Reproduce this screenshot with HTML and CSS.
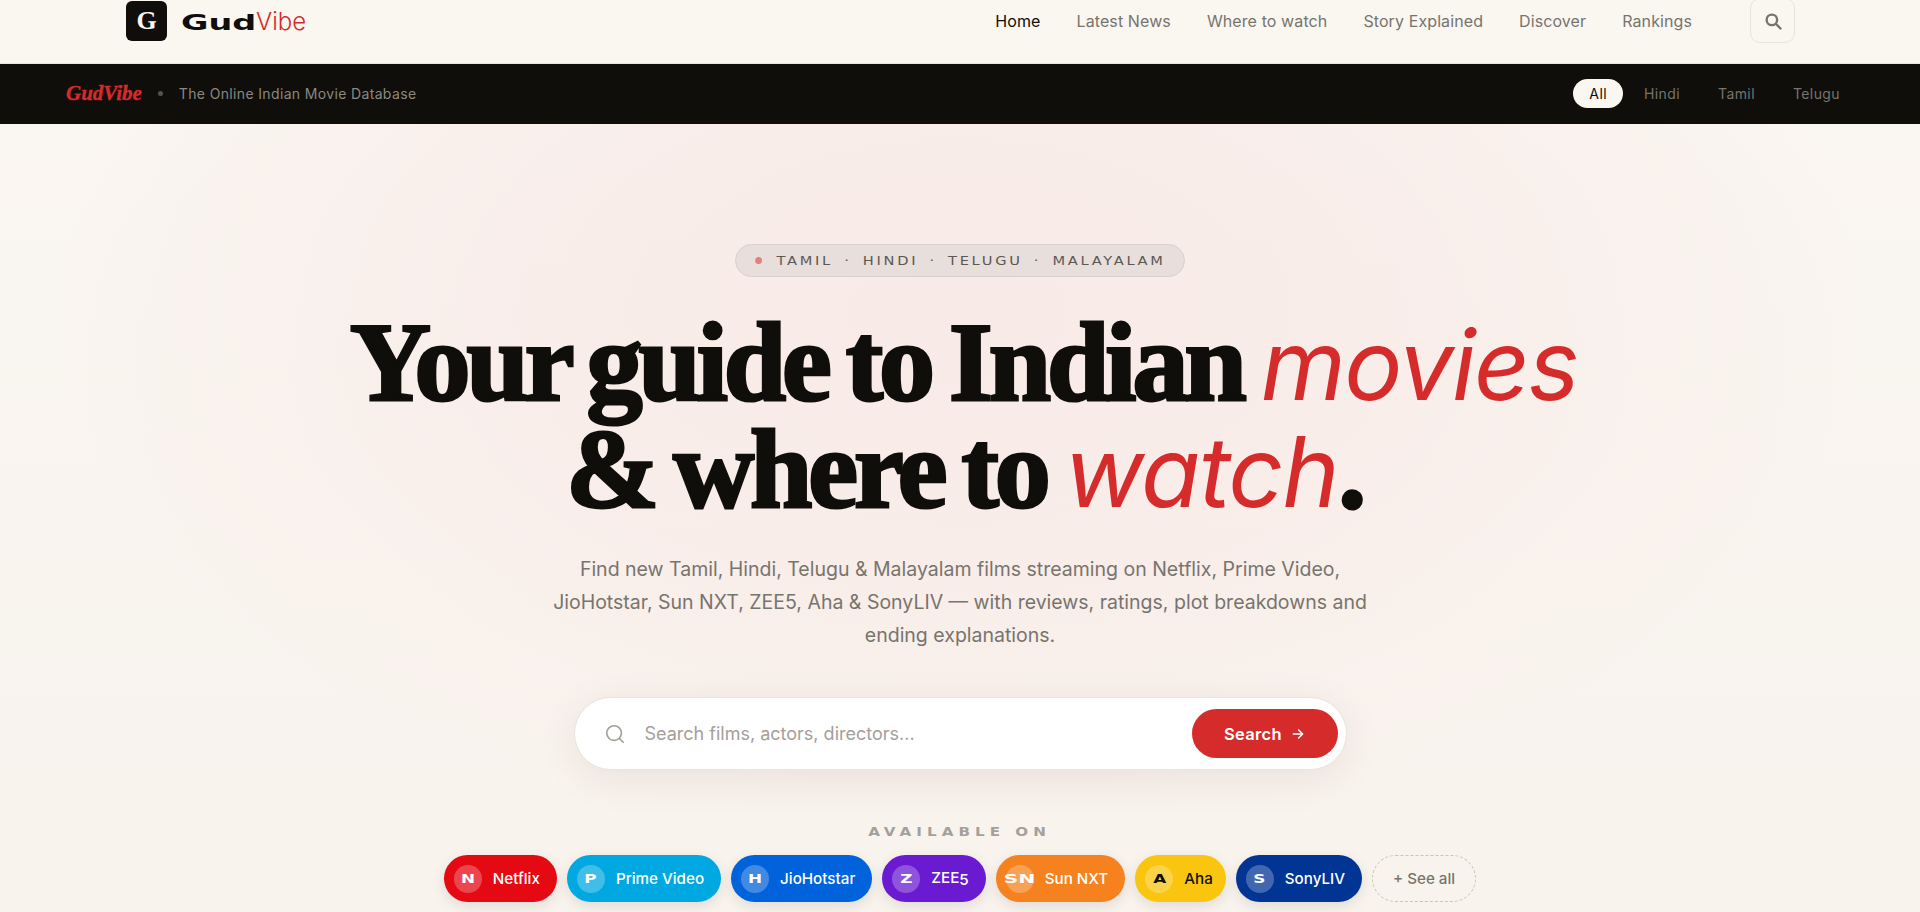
FILE: index.html
```html
<!DOCTYPE html>
<html lang="en">
<head>
    <meta charset="UTF-8">
    <title>GudVibe - The Online Indian Movie Database</title>
    <link rel="stylesheet" href="styles.css">
</head>
<body>

    <header class="site-header">
        <a class="logo" href="#">
            <span class="logo-mark">G</span>
            <span class="logo-word"><span class="logo-gud">Gud</span><span class="logo-vibe">Vibe</span></span>
        </a>
        <nav class="main-nav">
            <a class="active" href="#">Home</a>
            <a href="#">Latest News</a>
            <a href="#">Where to watch</a>
            <a href="#">Story Explained</a>
            <a href="#">Discover</a>
            <a href="#">Rankings</a>
        </nav>
        <button class="icon-btn" aria-label="Search">
            <svg width="18" height="18" viewBox="0 0 24 24" fill="none" stroke="#77746e" stroke-width="3.2" stroke-linecap="round"><circle cx="10.5" cy="10.5" r="7"/><path d="M16 16l6 6"/></svg>
        </button>
    </header>

    <div class="topbar">
        <div class="topbar-left">
            <span class="topbar-brand">GudVibe</span>
            <span class="topbar-dot"></span>
            <span class="topbar-tag">The Online Indian Movie Database</span>
        </div>
        <div class="lang-tabs">
            <a class="active" href="#">All</a>
            <a href="#">Hindi</a>
            <a href="#">Tamil</a>
            <a href="#">Telugu</a>
        </div>
    </div>

    <main class="hero">
        <div class="hero-badge">
            <div class="badge-list">
                <span class="badge-dot"></span>
                <span>TAMIL</span><span>·</span><span>HINDI</span><span>·</span><span>TELUGU</span><span>·</span><span>MALAYALAM</span>
            </div>
        </div>

        <h1 class="hero-title">
            <span class="line">Your guide to Indian <em>movies</em></span>
            <span class="line">&amp; where to <em>watch</em>.</span>
        </h1>

        <p class="hero-text">Find new Tamil, Hindi, Telugu &amp; Malayalam films streaming on Netflix, Prime Video, JioHotstar, Sun NXT, ZEE5, Aha &amp; SonyLIV — with reviews, ratings, plot breakdowns and ending explanations.</p>

        <form class="search-box">
            <svg class="search-icon" width="22" height="22" viewBox="0 0 24 24" fill="none" stroke="#a3a09a" stroke-width="1.8" stroke-linecap="round"><circle cx="11" cy="11" r="8"/><path d="M17 17l4 4"/></svg>
            <span class="search-input">Search films, actors, directors...</span>
            <button class="search-btn" type="button">Search
                <svg width="14" height="14" viewBox="0 0 24 24" fill="none" stroke="#fff" stroke-width="2.6" stroke-linecap="round" stroke-linejoin="round"><path d="M4 12h16M13 5l7 7-7 7"/></svg>
            </button>
        </form>

        <div class="avail-label">AVAILABLE ON</div>

        <div class="platforms">
            <a class="chip netflix" href="#"><span class="chip-mark"><b>N</b></span>Netflix</a>
            <a class="chip prime" href="#"><span class="chip-mark"><b>P</b></span>Prime Video</a>
            <a class="chip hotstar" href="#"><span class="chip-mark"><b>H</b></span>JioHotstar</a>
            <a class="chip zee" href="#"><span class="chip-mark"><b>Z</b></span><span>ZEE<span class="old-num">5</span></span></a>
            <a class="chip sun" href="#"><span class="chip-mark"><b>SN</b></span>Sun NXT</a>
            <a class="chip aha" href="#"><span class="chip-mark"><b>A</b></span>Aha</a>
            <a class="chip sony" href="#"><span class="chip-mark"><b>S</b></span>SonyLIV</a>
            <a class="chip see-all" href="#">+ See all</a>
        </div>
    </main>

</body>
</html>
```

FILE: styles.css
```css
* {
    box-sizing: border-box;
}
html, body {
    height: 100%;
}
body {
    margin: 0;
    font-family: Inter, "Noto Sans", sans-serif;
    background-color: #faf7f1;
    color: #0f0e0a;
    overflow: hidden;
}
a {
    text-decoration: none;
    color: inherit;
}

/* Header */
.site-header {
    display: flex;
    align-items: flex-start;
    height: 64px;
    padding: 1px 125px 0 126px;
    border-bottom: 1px solid #e8e4dc;
    background-color: #faf7f1;
}
.logo {
    display: flex;
    align-items: center;
    gap: 14px;
}
.logo-mark {
    display: flex;
    justify-content: center;
    align-items: center;
    width: 41px;
    height: 40px;
    border-radius: 6px;
    background-color: #0f0e0a;
    color: #faf7f1;
    font-family: "Liberation Serif", serif;
    font-weight: 700;
    font-size: 26px;
}
.logo-word {
    display: flex;
    align-items: baseline;
    font-size: 22px;
}
.logo-gud {
    display: inline-block;
    width: 75px;
    font-family: "DejaVu Sans", sans-serif;
    font-weight: 700;
    transform: scaleX(1.52);
    transform-origin: left;
}
.logo-vibe {
    font-weight: 300;
    color: #d62b2b;
    font-size: 24px;
}
.main-nav {
    display: flex;
    gap: 36px;
    margin-left: auto;
    padding-top: 10px;
    font-size: 16px;
    letter-spacing: 0.1px;
    color: #77746e;
}
.main-nav a {
    line-height: 20px;
}
.main-nav a.active {
    color: #0f0e0a;
}
.icon-btn {
    display: flex;
    justify-content: center;
    align-items: center;
    width: 45px;
    height: 45px;
    margin: -3px 0 0 58px;
    border: 1px solid #e8e4dc;
    border-radius: 10px;
    background: transparent;
}

/* Black bar */
.topbar {
    display: flex;
    justify-content: space-between;
    align-items: center;
    height: 60px;
    padding: 0 80px 2px 66px;
    background-color: #0f0e0a;
}
.topbar-left {
    display: flex;
    align-items: center;
}
.topbar-brand {
    font-family: "Liberation Serif", serif;
    font-weight: 700;
    font-style: italic;
    font-size: 21px;
    color: #d62b2b;
    -webkit-text-stroke: 0.4px #d62b2b;
}
.topbar-dot {
    width: 5px;
    height: 5px;
    margin: 0 16px 0 16px;
    border-radius: 50%;
    background-color: #55534e;
}
.topbar-tag {
    font-size: 14px;
    letter-spacing: 0.35px;
    color: #8b8880;
}
.lang-tabs {
    display: flex;
    align-items: center;
    gap: 38px;
    font-size: 14px;
    letter-spacing: 0.4px;
    color: #77746e;
}
.lang-tabs a.active {
    margin-right: -17px;
    padding: 6px 16px;
    border-radius: 15px;
    background-color: #faf7f1;
    color: #0f0e0a;
}

/* Hero */
.hero {
    display: flex;
    flex-direction: column;
    align-items: center;
    height: 788px;
    padding-top: 120px;
    background:
        radial-gradient(ellipse 900px 520px at 50% 190px, #f8eae7 0%, rgba(248, 234, 231, 0.65) 55%, rgba(248, 234, 231, 0) 100%),
        linear-gradient(#faf6f1, #f8f3ed);
}
.hero-badge {
    display: flex;
    justify-content: center;
    align-items: center;
    width: 450px;
    height: 33px;
    border: 1px solid #d9d0cc;
    border-radius: 17px;
    background-color: #e8dedb;
    font-family: "DejaVu Sans", sans-serif;
    font-size: 13px;
    letter-spacing: 2.4px;
    color: #5c5854;
}
.badge-list {
    display: flex;
    align-items: center;
    gap: 10px;
    flex: none;
    transform: scaleX(1.125);
}
.badge-dot {
    width: 6px;
    height: 7px;
    margin-right: 3px;
    border-radius: 50%;
    background-color: #e57f7f;
}
.hero-title {
    margin: 33px 0 0;
    padding-left: 8px;
    font-family: "Liberation Serif", serif;
    font-weight: 700;
    font-size: 112px;
    line-height: 105px;
    letter-spacing: -4px;
    word-spacing: -6px;
    text-align: center;
    -webkit-text-stroke: 3px #0f0e0a;
}
.hero-title .line {
    display: block;
    white-space: nowrap;
}
.hero-title em {
    font-family: Inter, sans-serif;
    font-weight: 400;
    font-style: italic;
    font-size: 97px;
    letter-spacing: -1.5px;
    color: #d62b2b;
    -webkit-text-stroke: 0;
}
.hero-text {
    width: 840px;
    margin: 29px 0 0;
    font-size: 19.5px;
    line-height: 33px;
    text-align: center;
    color: #77746e;
}
.search-box {
    display: flex;
    align-items: center;
    width: 773px;
    height: 73px;
    margin-top: 45px;
    padding: 0 8px 0 29px;
    border: 1px solid #e8e4dc;
    border-radius: 37px;
    background-color: #fff;
    box-shadow: 0 10px 40px rgba(80, 40, 20, 0.08);
}
.search-icon {
    flex: none;
}
.search-input {
    flex: 1;
    margin-left: 19px;
    font-size: 18px;
    color: #a3a09a;
}
.search-btn {
    display: flex;
    justify-content: center;
    align-items: center;
    gap: 9px;
    width: 146px;
    height: 49px;
    border: none;
    border-radius: 25px;
    background-color: #d62b2b;
    color: #fff;
    font-family: inherit;
    font-weight: 600;
    font-size: 16.5px;
    letter-spacing: 0.3px;
}
.avail-label {
    margin-top: 55px;
    font-family: "DejaVu Sans", sans-serif;
    font-weight: 700;
    font-size: 12px;
    letter-spacing: 4px;
    color: #a3a09a;
    transform: scaleX(1.26);
}
.platforms {
    display: flex;
    gap: 10px;
    margin-top: 16px;
}
.chip {
    display: flex;
    align-items: center;
    gap: 11px;
    height: 47px;
    padding: 0 17px 0 10px;
    border-radius: 24px;
    box-shadow: 0 4px 14px rgba(0, 0, 0, 0.1);
    color: #fff;
    font-weight: 500;
    font-size: 15.2px;
}
.chip-mark {
    display: flex;
    justify-content: center;
    align-items: center;
    width: 28px;
    height: 28px;
    border-radius: 50%;
    background-color: rgba(255, 255, 255, 0.25);
    font-family: "DejaVu Sans", sans-serif;
    font-size: 12px;
}
.chip-mark b {
    display: inline-block;
    flex: none;
    transform: scaleX(1.4);
}
.sun .chip-mark b {
    transform: scaleX(1.7);
}
.old-num {
    vertical-align: -2px;
}
.netflix { background-color: #e50914; }
.prime { background-color: #00a8e1; }
.hotstar { background-color: #0063db; }
.zee { background-color: #6a1bd1; }
.sun { background-color: #f5821f; }
.aha { background-color: #f9c50f; color: #0f0e0a; padding-right: 13px; }
.sony { background-color: #003594; }
.chip.see-all {
    padding: 0 20px;
    border: 1px dashed #c8c4bc;
    box-shadow: none;
    color: #77746e;
}
```
